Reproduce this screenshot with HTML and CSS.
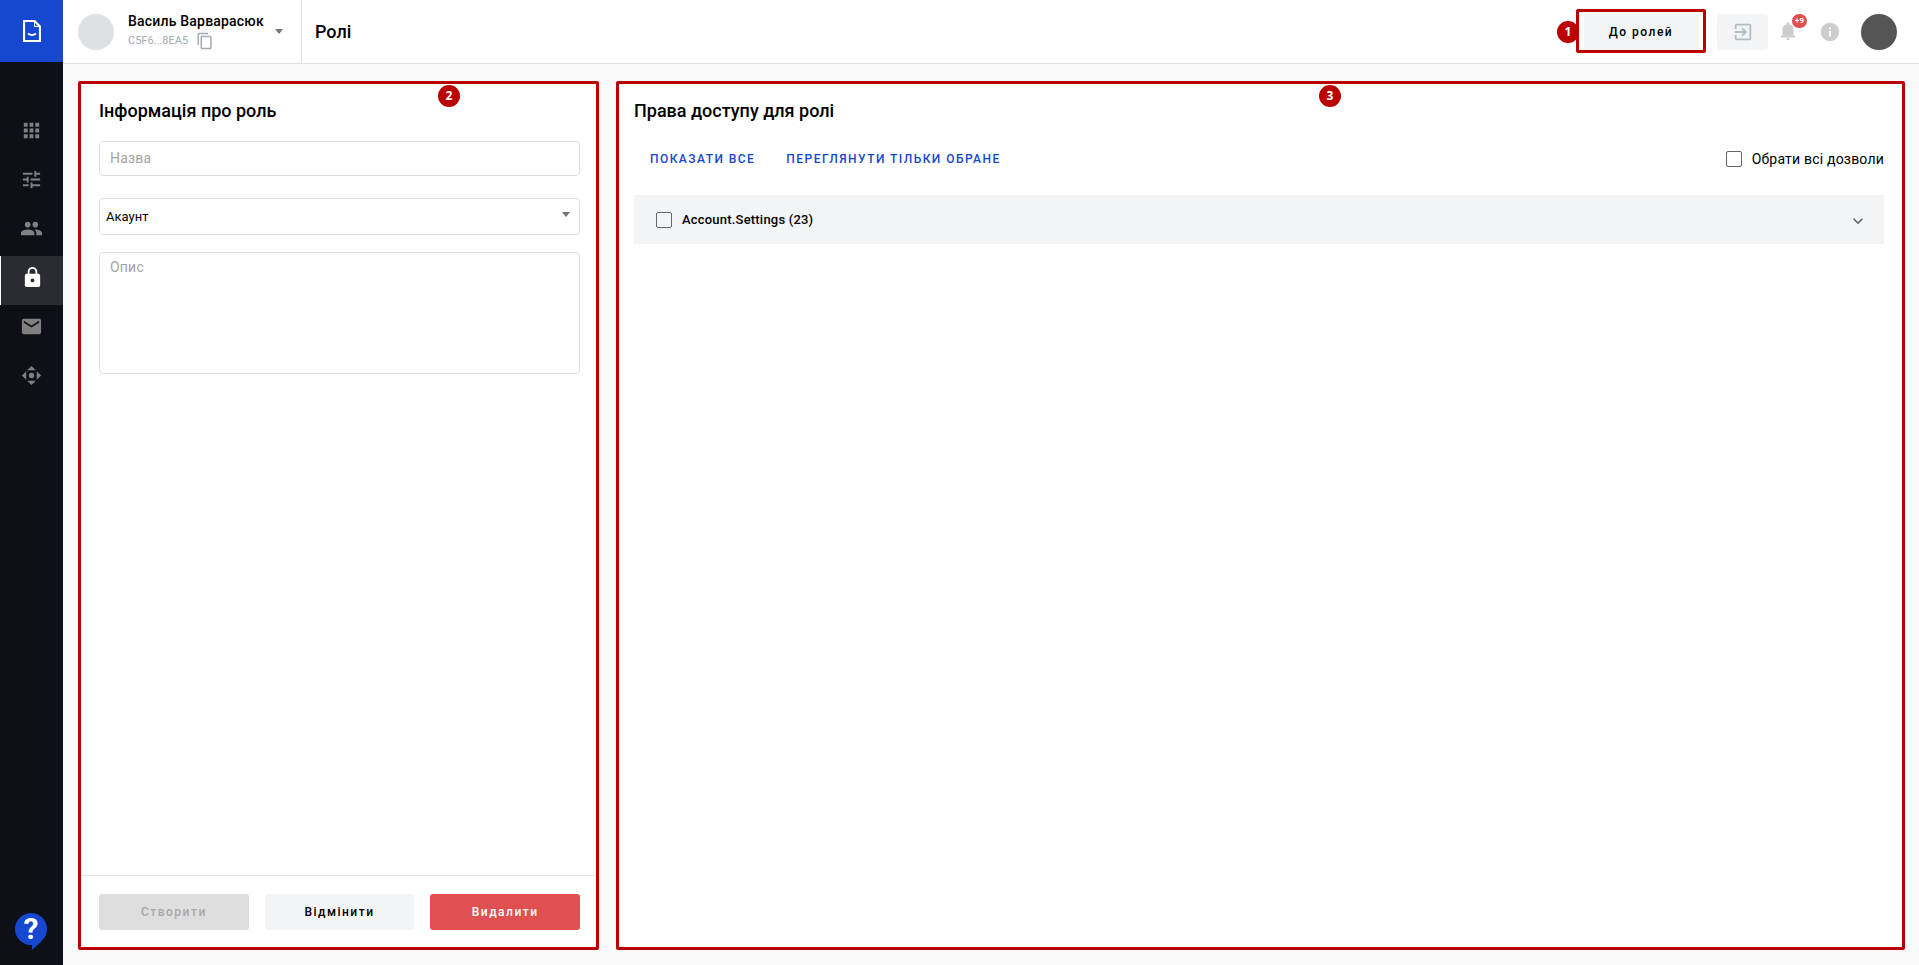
FILE: index.html
```html
<!DOCTYPE html>
<html>
<head>
  <title>Ролі</title>
  <link rel="stylesheet" href="styles.css">
</head>
<body>
  <div class="app">
    <div class="sidebar">
      <div class="logo">
        <svg width="18" height="22" viewBox="0 0 18 22" fill="none" stroke="#fff" stroke-width="2.200">
          <path d="M1 1h10.500L17 6.500V21H1z"/>
          <path d="M11.500 1v5.500H17" stroke-width="1"/>
          <path d="M5 13.500c2.500 2 5.500 2 8 0" stroke-width="1.800"/>
        </svg>
      </div>
      <div class="nav">
        <div class="nav-item"><svg viewBox="0 0 24 24"><path d="M4 8h4V4H4v4zm6 12h4v-4h-4v4zm-6 0h4v-4H4v4zm0-6h4v-4H4v4zm6 0h4v-4h-4v4zm6-10v4h4V4h-4zm-6 4h4V4h-4v4zm6 6h4v-4h-4v4zm0 6h4v-4h-4v4z"/></svg></div>
        <div class="nav-item"><svg viewBox="0 0 24 24"><path d="M3 17v2h6v-2H3zM3 5v2h10V5H3zm10 16v-2h8v-2h-8v-2h-2v6h2zM7 9v2H3v2h4v2h2V9H7zm14 4v-2H11v2h10zm-6-4h2V7h4V5h-4V3h-2v6z"/></svg></div>
        <div class="nav-item"><svg viewBox="0 0 24 24"><path d="M16 11c1.660 0 2.990-1.340 2.990-3S17.660 5 16 5c-1.660 0-3 1.340-3 3s1.340 3 3 3zm-8 0c1.660 0 2.990-1.340 2.990-3S9.660 5 8 5C6.340 5 5 6.340 5 8s1.340 3 3 3zm0 2c-2.330 0-7 1.170-7 3.500V19h14v-2.500c0-2.330-4.670-3.500-7-3.500zm8 0c-.29 0-.62.02-.97.05 1.160.84 1.970 1.970 1.970 3.450V19h6v-2.500c0-2.330-4.670-3.500-7-3.500z"/></svg></div>
        <div class="nav-item active"><svg viewBox="0 0 24 24"><path d="M18 8h-1V6c0-2.760-2.240-5-5-5S7 3.240 7 6v2H6c-1.100 0-2 .9-2 2v10c0 1.100.9 2 2 2h12c1.100 0 2-.9 2-2V10c0-1.100-.9-2-2-2zm-6 9c-1.100 0-2-.9-2-2s.9-2 2-2 2 .9 2 2-.9 2-2 2zm3.100-9H8.900V6c0-1.710 1.390-3.100 3.100-3.100 1.710 0 3.100 1.390 3.100 3.100v2z"/></svg></div>
        <div class="nav-item"><svg viewBox="0 0 24 24"><path d="M20 4H4c-1.100 0-1.990.9-1.990 2L2 18c0 1.100.9 2 2 2h16c1.100 0 2-.9 2-2V6c0-1.100-.9-2-2-2zm0 4l-8 5-8-5V6l8 5 8-5v2z"/></svg></div>
        <div class="nav-item"><svg viewBox="0 0 24 24"><path d="M12 2l4.500 4.500h-9zM22 12l-4.500 4.500v-9zM12 22l-4.500-4.500h9zM2 12l4.500-4.500v9z"/><circle cx="12" cy="12" r="2.800"/></svg></div>
      </div>
      <div class="help">
        <svg width="32" height="37" viewBox="0 0 32 37">
          <circle cx="16" cy="16" r="16" fill="#1647cf"/>
          <path d="M17 30v7l10-9z" fill="#1647cf"/>
        </svg>
        <span class="help-mark">?</span>
      </div>
    </div>

    <div class="main">
      <div class="header">
        <div class="account">
          <div class="account-avatar"></div>
          <div class="account-info">
            <div class="account-name">Василь Варварасюк</div>
            <div class="account-code">C5F6...8EA5
              <svg width="18" height="18" viewBox="0 0 24 24" fill="#a3abb4"><path d="M16 1H4c-1.100 0-2 .9-2 2v14h2V3h12V1zm3 4H8c-1.100 0-2 .9-2 2v14c0 1.100.9 2 2 2h11c1.100 0 2-.9 2-2V7c0-1.100-.9-2-2-2zm0 16H8V7h11v14z"/></svg>
            </div>
          </div>
          <div class="caret"></div>
        </div>
        <div class="page-title">Ролі</div>
        <div class="header-right">
          <div class="marked-box">
            <span class="marker marker-left">1</span>
            <button class="btn btn-light btn-roles">До ролей</button>
          </div>
          <div class="exit-btn">
            <svg width="22" height="22" viewBox="0 0 24 24" fill="#b5bcc4"><path d="M10.090 15.590L11.500 17l5-5-5-5-1.410 1.410L12.670 11H3v2h9.670l-2.580 2.590zM19 3H5c-1.110 0-2 .9-2 2v4h2V5h14v14H5v-4H3v4c0 1.100.89 2 2 2h14c1.100 0 2-.9 2-2V5c0-1.100-.9-2-2-2z"/></svg>
          </div>
          <div class="bell">
            <svg width="22" height="22" viewBox="0 0 24 24" fill="#cdcdcd"><path d="M12 22c1.100 0 2-.9 2-2h-4c0 1.100.89 2 2 2zm6-6v-5c0-3.070-1.640-5.640-4.500-6.320V4c0-.83-.67-1.500-1.500-1.500s-1.500.67-1.500 1.500v.68C7.630 5.360 6 7.920 6 11v5l-2 2v1h16v-1l-2-2z"/></svg>
            <span class="bell-badge">+9</span>
          </div>
          <svg class="info" width="22" height="22" viewBox="0 0 24 24" fill="#cdcdcd"><path d="M12 2C6.480 2 2 6.480 2 12s4.480 10 10 10 10-4.480 10-10S17.520 2 12 2zm1 15h-2v-6h2v6zm0-8h-2V7h2v2z"/></svg>
          <div class="user-avatar"></div>
        </div>
      </div>

      <div class="content">
        <div class="card card-info">
          <span class="marker marker-top">2</span>
          <div class="card-body">
            <h2 class="card-title">Інформація про роль</h2>
            <input class="field field-name" type="text" placeholder="Назва">
            <div class="select-wrap">
              <select class="field field-select"><option>Акаунт</option></select>
              <div class="caret select-caret"></div>
            </div>
            <textarea class="field field-desc" placeholder="Опис"></textarea>
          </div>
          <div class="card-footer">
            <button class="btn btn-disabled">Створити</button>
            <button class="btn btn-light">Відмінити</button>
            <button class="btn btn-danger">Видалити</button>
          </div>
        </div>

        <div class="card card-rights">
          <span class="marker marker-top">3</span>
          <h2 class="card-title">Права доступу для ролі</h2>
          <div class="toolbar">
            <a class="link">Показати все</a>
            <a class="link">Переглянути тільки обране</a>
            <label class="check-all"><span class="checkbox"></span>Обрати всі дозволи</label>
          </div>
          <div class="group-row">
            <span class="checkbox"></span>
            <span class="group-name">Account.Settings (23)</span>
            <svg class="chevron" width="20" height="20" viewBox="0 0 24 24" fill="#666"><path d="M7.410 8.590L12 13.170l4.590-4.580L18 10l-6 6-6-6z"/></svg>
          </div>
        </div>
      </div>
    </div>
  </div>
</body>
</html>
```

FILE: styles.css
```css
* {
  box-sizing: border-box;
}

html, body {
  height: 100%;
}

body {
  margin: 0;
  font-family: Roboto, "Liberation Sans", sans-serif;
  color: #000;
  background-color: #f9f9f9;
  overflow: hidden;
}

.app {
  display: flex;
  height: 965px;
}

/* sidebar */
.sidebar {
  width: 63px;
  flex-shrink: 0;
  display: flex;
  flex-direction: column;
  background-color: #0d1117;
}

.logo {
  height: 62px;
  display: flex;
  align-items: center;
  justify-content: center;
  background-color: #1647cf;
}

.nav {
  margin-top: 47px;
  flex: 1;
}

.nav-item {
  height: 49px;
  padding-bottom: 7px;
  display: flex;
  align-items: center;
  justify-content: center;
}

.nav-item svg {
  width: 23px;
  height: 23px;
  fill: #808080;
}

.nav-item.active {
  background-color: #292c31;
  border-left: 1px solid #fff;
}

.nav-item.active svg {
  fill: #fff;
}

.help {
  position: relative;
  height: 37px;
  margin: 0 0 15px 15px;
}

.help-mark {
  position: absolute;
  top: 0;
  left: 0;
  width: 32px;
  text-align: center;
  color: #fff;
  font-size: 30px;
  font-weight: 700;
  line-height: 32px;
}

/* header */
.main {
  flex: 1;
  min-width: 0;
  display: flex;
  flex-direction: column;
}

.header {
  height: 64px;
  flex-shrink: 0;
  display: flex;
  align-items: center;
  background-color: #fff;
  border-bottom: 1px solid #e0e0e0;
}

.account {
  width: 239px;
  height: 63px;
  display: flex;
  align-items: center;
  padding-left: 15px;
  border-right: 1px solid #e0e0e0;
}

.account-avatar {
  width: 36px;
  height: 36px;
  border-radius: 50%;
  background-color: #dee1e4;
}

.account-info {
  margin: -2px 0 0 14px;
  width: 147px;
}

.account-name {
  margin-bottom: 2px;
  font-size: 14px;
  font-weight: 500;
  line-height: 18px;
  letter-spacing: .2px;
  white-space: nowrap;
}

.account-code {
  display: flex;
  align-items: center;
  gap: 8px;
  font-size: 11px;
  line-height: 16px;
  color: #a3abb4;
}

.caret {
  width: 0;
  height: 0;
  border-left: 4.5px solid transparent;
  border-right: 4.5px solid transparent;
  border-top: 5px solid #757575;
}

.page-title {
  margin-left: 13px;
  font-size: 18px;
  font-weight: 500;
}

.header-right {
  margin-left: auto;
  display: flex;
  align-items: center;
  padding-right: 22px;
}

.marked-box {
  position: relative;
  width: 130px;
  height: 44px;
  margin-top: -1px;
  padding: 2px 5px 0;
  border: 3px solid #bb0000;
  border-radius: 2px;
}

.btn-roles {
  display: block;
  width: 100%;
  height: 36px;
}

.exit-btn {
  width: 51px;
  height: 36px;
  margin-left: 11px;
  display: flex;
  align-items: center;
  justify-content: center;
  background-color: #f3f4f6;
  border-radius: 4px;
}

.bell {
  position: relative;
  margin: 0 0 1px 9px;
  height: 22px;
}

.bell-badge {
  position: absolute;
  top: -6px;
  left: 15px;
  width: 15px;
  height: 14px;
  border-radius: 7px;
  background-color: #e05050;
  color: #fff;
  font-size: 8px;
  font-weight: 700;
  line-height: 14px;
  text-align: center;
}

.info {
  margin-left: 20px;
}

.user-avatar {
  width: 36px;
  height: 36px;
  margin-left: 20px;
  border-radius: 50%;
  background-color: #555;
}

/* red numbered markers */
.marker {
  position: absolute;
  width: 22px;
  height: 22px;
  border-radius: 50%;
  background-color: #bb0000;
  color: #fff;
  font-family: "Open Sans", sans-serif;
  font-size: 12px;
  font-weight: 700;
  line-height: 22px;
  text-align: center;
}

.marker-left {
  left: -22px;
  top: 9px;
}

.marker-top {
  top: 1px;
}

.card-info .marker-top {
  left: 357px;
}

.card-rights .marker-top {
  left: 700px;
}

/* cards */
.content {
  flex: 1;
  min-height: 0;
  display: flex;
  gap: 17px;
  padding: 17px 14px 15px 15px;
}

.card {
  position: relative;
  background-color: #fff;
  border: 3px solid #bb0000;
  border-radius: 2px;
}

.card-info {
  width: 521px;
  flex-shrink: 0;
  display: flex;
  flex-direction: column;
}

.card-body {
  flex: 1;
  padding: 0 16px 0 18px;
}

.card-title {
  margin: 0;
  padding-top: 15px;
  font-size: 18px;
  font-weight: 500;
  line-height: 24px;
}

.field {
  display: block;
  width: 100%;
  background-color: #fff;
  border: 1px solid #dedede;
  border-radius: 4px;
  font-family: inherit;
  outline: none;
}

.field::placeholder {
  color: #a3a3a3;
  letter-spacing: .2px;
  opacity: 1;
}

.field-name {
  height: 35px;
  margin-top: 18px;
  padding: 0 10px 2px;
  font-size: 14px;
}

.select-wrap {
  position: relative;
  margin-top: 22px;
}

.field-select {
  height: 37px;
  padding: 0 6px;
  font-size: 13px;
  color: #000;
  appearance: none;
}

.select-caret {
  position: absolute;
  top: 14px;
  right: 10px;
}

.field-desc {
  height: 122px;
  margin-top: 17px;
  padding: 6px 10px;
  font-size: 14px;
  resize: none;
}

.card-footer {
  display: grid;
  grid-template-columns: repeat(3, 1fr);
  gap: 16px;
  height: 72px;
  padding: 18px 16px 0 18px;
  border-top: 1px solid #e0e0e0;
}

.btn {
  height: 36px;
  border: none;
  border-radius: 3px;
  font-family: inherit;
  font-size: 12px;
  font-weight: 500;
  letter-spacing: 1.5px;
}

.btn-light {
  background-color: #f3f4f6;
  color: #000;
}

.btn-disabled {
  background-color: #dedede;
  color: #a8a8a8;
}

.btn-danger {
  background-color: #e05050;
  color: #fff;
}

.card-rights {
  flex: 1;
  min-width: 0;
  padding: 0 18px 0 15px;
}

.toolbar {
  display: flex;
  align-items: center;
  height: 36px;
  margin-top: 18px;
  padding-left: 16px;
}

.link {
  margin-right: 31px;
  font-size: 12px;
  font-weight: 500;
  letter-spacing: 1.45px;
  text-transform: uppercase;
  color: #1647cf;
}

.check-all {
  margin-left: auto;
  display: flex;
  align-items: center;
  gap: 10px;
  font-size: 14px;
  letter-spacing: .2px;
}

.checkbox {
  width: 16px;
  height: 16px;
  border: 1px solid #666;
  border-radius: 2px;
  background-color: #fff;
}

.group-row {
  display: flex;
  align-items: center;
  height: 49px;
  margin-top: 18px;
  padding: 0 16px 0 22px;
  background-color: #f3f4f6;
}

.group-row .checkbox {
  background-color: transparent;
}

.group-name {
  margin-left: 10px;
  font-size: 13px;
  font-weight: 500;
  letter-spacing: .2px;
}

.chevron {
  margin: 3px 0 0 auto;
}
```
